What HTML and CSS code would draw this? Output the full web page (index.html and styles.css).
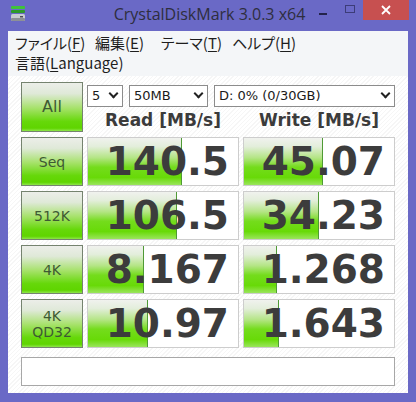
FILE: index.html
```html
<!DOCTYPE html>
<html>
<head>
    <title>CrystalDiskMark 3.0.3 x64</title>
    <link rel="stylesheet" href="styles.css">
</head>
<body>
    <div class="window">
        <div class="titlebar">
            <svg class="app-icon" width="16" height="16" viewBox="0 0 16 16">
                <rect x="1" y="0" width="14" height="3" rx="1" fill="#3fc23a"/>
                <rect x="1" y="4" width="14" height="3" rx="1" fill="#2e9a2a"/>
                <rect x="1" y="8" width="14" height="7" rx="1.5" fill="#c8cbd0"/>
                <rect x="1" y="12" width="14" height="3" rx="1" fill="#8d9096"/>
                <rect x="10" y="10" width="3" height="1.5" fill="#4a4d52"/>
            </svg>
            <div class="title">CrystalDiskMark 3.0.3 x64</div>
            <div class="controls">
                <div class="ctl ctl-min"><span class="min-bar"></span></div>
                <div class="ctl ctl-max"><span class="max-box"></span></div>
                <div class="ctl ctl-close">
                    <svg width="10" height="10" viewBox="0 0 10 10">
                        <path d="M1 1 L9 9 M9 1 L1 9" stroke="#fff" stroke-width="1.8"/>
                    </svg>
                </div>
            </div>
        </div>

        <div class="menubar">
            <div class="menu-row">
                <span class="menu-item m-file">ファイル(<u>F</u>)</span>
                <span class="menu-item m-edit">編集(<u>E</u>)</span>
                <span class="menu-item m-theme">テーマ(<u>T</u>)</span>
                <span class="menu-item">ヘルプ(<u>H</u>)</span>
            </div>
            <div class="menu-row">
                <span class="menu-item">言語(<u>L</u>anguage)</span>
            </div>
        </div>

        <div class="client">
            <div class="grid">
                <div class="btn btn-all">All</div>
                <div class="top-panel">
                    <div class="selects">
                        <div class="sel sel-count">5<i class="chev"></i></div>
                        <div class="sel sel-size">50MB<i class="chev"></i></div>
                        <div class="sel sel-drive">D: 0% (0/30GB)<i class="chev"></i></div>
                    </div>
                    <div class="heads">
                        <div class="head">Read [MB/s]</div>
                        <div class="head">Write [MB/s]</div>
                    </div>
                </div>

                <div class="btn">Seq</div>
                <div class="cell"><div class="bar" style="width:94px"></div><span class="val">140.5</span></div>
                <div class="cell"><div class="bar" style="width:79px"></div><span class="val">45.07</span></div>

                <div class="btn">512K</div>
                <div class="cell"><div class="bar" style="width:89px"></div><span class="val">106.5</span></div>
                <div class="cell"><div class="bar" style="width:75px"></div><span class="val">34.23</span></div>

                <div class="btn">4K</div>
                <div class="cell"><div class="bar" style="width:56px"></div><span class="val">8.167</span></div>
                <div class="cell"><div class="bar" style="width:33px"></div><span class="val">1.268</span></div>

                <div class="btn btn-two">4K<br>QD32</div>
                <div class="cell"><div class="bar" style="width:60px"></div><span class="val">10.97</span></div>
                <div class="cell"><div class="bar" style="width:35px"></div><span class="val">1.643</span></div>
            </div>
            <div class="status"></div>
        </div>
    </div>
</body>
</html>
```

FILE: styles.css
```css
* {
    margin: 0;
    padding: 0;
    box-sizing: border-box;
}
body {
    width: 416px;
    height: 402px;
    overflow: hidden;
    background: #6a69c6;
    font-family: "DejaVu Sans", sans-serif;
}
.window {
    height: 402px;
    display: flex;
    flex-direction: column;
    padding: 0 8px 9px;
    background: #6a69c6;
}

/* title bar */
.titlebar {
    height: 31px;
    margin: 0 -8px;
    display: grid;
    grid-template-columns: 1fr auto 1fr;
    align-items: start;
    padding-left: 10px;
    padding-right: 7px;
}
.app-icon {
    margin-top: 6px;
}
.title {
    font-family: "Open Sans", sans-serif;
    font-size: 16px;
    line-height: 31px;
    color: #2e2e3e;
    margin-top: -1px;
}
.controls {
    justify-self: end;
    display: flex;
}
.ctl {
    height: 20px;
    display: flex;
    align-items: center;
    justify-content: center;
}
.ctl-min {
    width: 26px;
}
.min-bar {
    width: 8px;
    height: 2px;
    margin-top: 7px;
    background: #23234a;
}
.ctl-max {
    width: 27px;
}
.max-box {
    width: 10px;
    height: 8px;
    margin-top: -2px;
    border: 1px solid #3c3c78;
}
.ctl-close {
    width: 46px;
    background: #c75050;
}

/* menu */
.menubar {
    height: 45px;
    background: #f4f6f8;
    padding: 2px 7px 0;
    font-family: "Noto Sans CJK JP", sans-serif;
    font-size: 15px;
    font-feature-settings: "palt";
    color: #1e1e1e;
}
.menu-row {
    height: 20px;
    line-height: 20px;
    display: flex;
}
.m-file {
    width: 80px;
}
.m-edit {
    width: 66px;
}
.m-theme {
    width: 71px;
}
.menu-item u {
    text-underline-offset: 2px;
}

/* client area */
.client {
    flex: 1;
    padding: 6px 13px 7px;
    background: repeating-linear-gradient(-45deg, #ffffff 0 2px, #f6f6f6 2px 3px);
    display: flex;
    flex-direction: column;
}
.grid {
    display: grid;
    grid-template-columns: 62px 152px 152px;
    grid-template-rows: 50px repeat(4, 49px);
    column-gap: 4px;
    row-gap: 5px;
}
.btn {
    border: 1px solid #75836f;
    background: linear-gradient(#eceee9 0%, #dfe9d8 22%, #a7e26c 52%, #66d80a 80%, #5fd500 94%, #8ee54a 100%);
    color: #3e5a33;
    font-size: 14px;
    display: flex;
    align-items: center;
    justify-content: center;
    text-align: center;
    line-height: 16px;
}
.btn-all {
    font-size: 16px;
}
.top-panel {
    grid-column: 2 / 4;
    display: flex;
    flex-direction: column;
}
.selects {
    margin-top: 3px;
    display: flex;
    gap: 6px;
}
.sel {
    height: 22px;
    border: 1px solid #8c8c8c;
    background: #fff;
    font-size: 13px;
    color: #1a1a1a;
    line-height: 20px;
    padding-left: 4px;
    display: flex;
    justify-content: space-between;
    padding-right: 5px;
}
.sel-count {
    width: 36px;
}
.sel-size {
    width: 79px;
}
.sel-drive {
    flex: 1;
}
.chev {
    width: 7px;
    height: 7px;
    border-right: 2px solid #222;
    border-bottom: 2px solid #222;
    transform: rotate(45deg);
    margin-top: 4px;
}
.heads {
    display: flex;
    gap: 4px;
    flex: 1;
}
.head {
    flex: 1;
    text-align: center;
    font-weight: bold;
    font-size: 17px;
    color: #3b3b3b;
    line-height: 24px;
    margin-top: 1px;
}
.cell {
    position: relative;
    border: 1px solid #cdcdcd;
    background: #fff;
    display: flex;
    align-items: center;
    justify-content: flex-end;
    padding-right: 9px;
}
.bar {
    position: absolute;
    left: 0;
    top: 0;
    bottom: 0;
    border-right: 1px solid #4f9a35;
    background: linear-gradient(#f0f2ee 0%, #e3eedb 18%, #b4e585 42%, #74dc1c 62%, #68da08 84%, #9ae55c 100%);
}
.val {
    position: relative;
    font-weight: bold;
    font-size: 39px;
    color: #3c3c3c;
    line-height: 1;
}
.status {
    margin-top: 9px;
    height: 29px;
    border: 1px solid #a7a7a7;
    background: #fff;
}
```
